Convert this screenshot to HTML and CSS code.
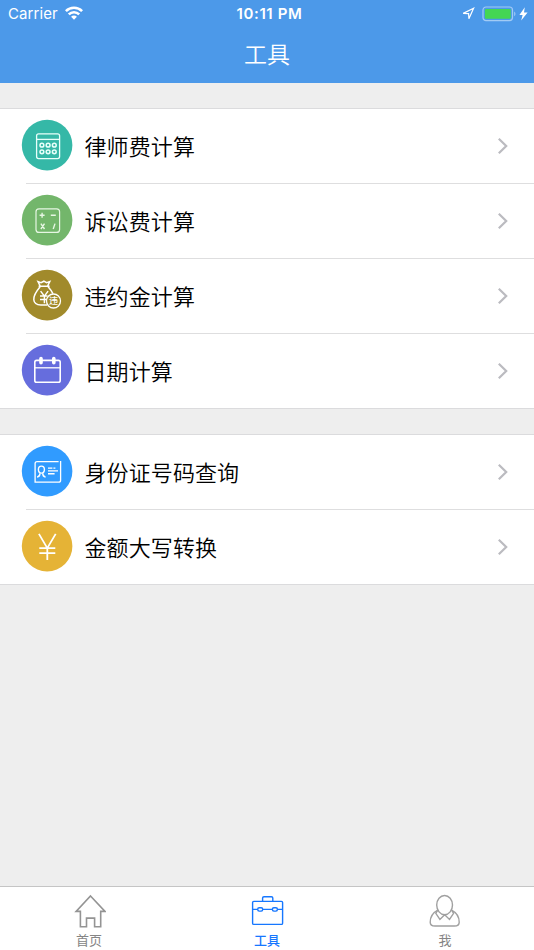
FILE: index.html
```
<!DOCTYPE html>
<html lang="zh-CN">
<head>
    <meta charset="UTF-8">
    <meta name="viewport" content="width=device-width, initial-scale=1.0">
    <title>工具</title>
    <link rel="stylesheet" href="styles.css">
</head>
<body>
    <div class="app">
        <header class="header">
            <div class="status-bar">
                <div class="status-left">
                    <span class="carrier">Carrier</span>
                    <svg class="wifi" width="18" height="14" viewBox="0 0 18 14" fill="none" stroke="#fff" stroke-width="2.6">
                        <path d="M.9 5.1a11.5 11.5 0 0 1 16.2 0"/>
                        <path d="M3.8 8.4a7.4 7.4 0 0 1 10.4 0"/>
                        <path d="M9 13.8 6.1 10.8a3.9 3.9 0 0 1 5.8 0z" fill="#fff" stroke="none"/>
                    </svg>
                </div>
                <span class="time">10:11 PM</span>
                <div class="status-right">
                    <svg width="13" height="13" viewBox="0 0 13 13" fill="none" stroke="#fff" stroke-width="1.2">
                        <path d="M11.6 1.2 1.2 6.4l5.4.2.3 5.2z"/>
                    </svg>
                    <svg class="battery" width="35" height="16" viewBox="0 0 35 16">
                        <rect x="1" y="1" width="29.5" height="13.6" rx="3" fill="none" stroke="#a2cbf5" stroke-width="1.2"/>
                        <rect x="2.9" y="2.9" width="25.8" height="9.8" rx="1.2" fill="#44d653"/>
                        <path d="M32.2 5.6c1.7.8 1.7 3.8 0 4.6z" fill="#a2cbf5"/>
                    </svg>
                    <svg width="9" height="14" viewBox="0 0 9 14">
                        <path d="M5.8.2.4 7.9h3.2L2.2 13.6 8.6 5.5H5z" fill="#fff"/>
                    </svg>
                </div>
            </div>
            <h1 class="title">工具</h1>
        </header>

        <main class="content">
            <ul class="group">
                <li class="row">
                    <svg class="icon" viewBox="0.4 0.4 51 51" fill="none" stroke="#e8fffa" stroke-width="1.3">
                        <circle cx="25.5" cy="25.5" r="25.3" fill="#35b8a7" stroke="none"/>
                        <rect x="15" y="14.2" width="23" height="24.8" rx="2"/>
                        <path d="M15 19.8h23"/>
                        <g stroke-width="1.5">
                            <circle cx="20.3" cy="25.6" r="1.9"/>
                            <circle cx="26.5" cy="25.6" r="1.9"/>
                            <circle cx="32.7" cy="25.6" r="1.9"/>
                            <circle cx="20.3" cy="32.2" r="1.9"/>
                            <circle cx="26.5" cy="32.2" r="1.9"/>
                            <circle cx="32.7" cy="32.2" r="1.9"/>
                        </g>
                    </svg>
                    <span class="label">律师费计算</span>
                    <svg class="arrow" viewBox="0 0 12 18"><path d="m1.8 1.8 7.4 7.2-7.4 7.2"/></svg>
                </li>
                <li class="row">
                    <svg class="icon" viewBox="0.4 0.4 51 51" fill="none" stroke="#e6f6e3" stroke-width="1.2">
                        <circle cx="25.5" cy="25.5" r="25.3" fill="#73b66b" stroke="none"/>
                        <rect x="14.4" y="14.2" width="23.6" height="23.6" rx="3"/>
                        <path d="M18 20.6h5M20.5 18.1v5M29.2 20.6h5" stroke-width="1.4"/>
                        <path d="m19.3 29 3.6 5.4M22.9 29l-3.6 5.4M33.4 29l-1.8 5.4" stroke-width="1.4"/>
                    </svg>
                    <span class="label">诉讼费计算</span>
                    <svg class="arrow" viewBox="0 0 12 18"><path d="m1.8 1.8 7.4 7.2-7.4 7.2"/></svg>
                </li>
                <li class="row">
                    <svg class="icon" viewBox="0.4 0.4 51 51" fill="none" stroke="#fff" stroke-width="1.5">
                        <circle cx="25.5" cy="25.5" r="25.3" fill="#a18a2b" stroke="none"/>
                        <path d="M18.5 16.3 16.4 12l3 1 2.9-1.4 2.7 1.4 3.2-1-2.1 4.3M17 16.7h11"/>
                        <path d="M18.5 17.2c-3.5 4.2-6.8 8.4-6.3 13 .3 3.7 3.2 5.1 7 5.1h6.3M26.5 17.2c2 2.2 3.5 4.3 4.8 6.8"/>
                        <path d="m19 21.5 3.8 5 3.7-5M22.8 26.5v7.2M18.4 26.5h7.5M18.4 29.8H25"/>
                        <circle cx="31.9" cy="31.4" r="7" fill="#a18a2b" stroke-width="1.3"/>
                        <text class="badge" x="31.9" y="34.7" text-anchor="middle">违</text>
                    </svg>
                    <span class="label">违约金计算</span>
                    <svg class="arrow" viewBox="0 0 12 18"><path d="m1.8 1.8 7.4 7.2-7.4 7.2"/></svg>
                </li>
                <li class="row">
                    <svg class="icon" viewBox="0.4 0.4 51 51" fill="none" stroke="#fff" stroke-width="1.6">
                        <circle cx="25.5" cy="25.5" r="25.3" fill="#666ddd" stroke="none"/>
                        <rect x="13.2" y="15.8" width="25.4" height="21.8" rx="1.8"/>
                        <path d="M13.2 23.2h25.4" stroke-width="1.3"/>
                        <path d="M19.4 13.9v4.2M32.2 13.9v4.2" stroke-width="3.6" stroke-linecap="round"/>
                    </svg>
                    <span class="label">日期计算</span>
                    <svg class="arrow" viewBox="0 0 12 18"><path d="m1.8 1.8 7.4 7.2-7.4 7.2"/></svg>
                </li>
            </ul>

            <ul class="group">
                <li class="row">
                    <svg class="icon" viewBox="0.4 0.4 51 51" fill="none" stroke="#fff" stroke-width="1.3">
                        <circle cx="25.5" cy="25.5" r="25.3" fill="#309bff" stroke="none"/>
                        <path d="M37 16H15.5a2 2 0 0 0-2 2v18.6H37a2 2 0 0 0 2-2V15.4"/>
                        <ellipse cx="19.8" cy="24" rx="3" ry="3.5" stroke-width="1.4"/>
                        <path d="M15.4 31.5c2.2-.3 3-1.4 3-3.8M24 31.5c-2.2-.3-2.9-1.4-2.9-3.8" stroke-width="1.4"/>
                        <path d="M26.4 22.5h4.4M31.8 22.5h2M26.4 25.3h10M26.4 28.2H33" stroke-width="1.4"/>
                    </svg>
                    <span class="label">身份证号码查询</span>
                    <svg class="arrow" viewBox="0 0 12 18"><path d="m1.8 1.8 7.4 7.2-7.4 7.2"/></svg>
                </li>
                <li class="row">
                    <svg class="icon" viewBox="0.4 0.4 51 51" fill="none" stroke="#fff" stroke-width="1.8">
                        <circle cx="25.5" cy="25.5" r="25.3" fill="#e5b336" stroke="none"/>
                        <path d="m17.3 13.3 8.4 14.2 8.4-14.2M25.7 27.5v11.8M17.7 27.6h16M17.7 32.5h16"/>
                    </svg>
                    <span class="label">金额大写转换</span>
                    <svg class="arrow" viewBox="0 0 12 18"><path d="m1.8 1.8 7.4 7.2-7.4 7.2"/></svg>
                </li>
            </ul>
        </main>

        <nav class="tab-bar">
            <a class="tab">
                <svg class="tab-icon" viewBox="0 0 34 36" fill="none" stroke="#949494" stroke-width="1.6">
                    <path d="M18.5 3 33 18.4h-4.3v15.3h-6.1v-8.6h-8.1v8.6H8.4V18.4H4.1z"/>
                </svg>
                <span>首页</span>
            </a>
            <a class="tab active">
                <svg class="tab-icon" viewBox="0 0 34 36" fill="none" stroke="#1677ff" stroke-width="1.4">
                    <rect x="2.6" y="8.4" width="30" height="23" rx="1.2"/>
                    <path d="M12.6 8.4V5.1c0-.9.5-1.4 1.4-1.4h7.4c.9 0 1.4.5 1.4 1.4v3.3"/>
                    <path d="M2.7 16.4h5M12.7 16.4h9.8M27.5 16.4h5.2" stroke-width="1.3"/>
                    <rect x="7.7" y="14.7" width="5" height="3.4" rx="1.5"/>
                    <rect x="22.4" y="14.7" width="5" height="3.4" rx="1.5"/>
                </svg>
                <span>工具</span>
            </a>
            <a class="tab">
                <svg class="tab-icon" viewBox="1 0 34 36" fill="none" stroke="#a0a0a0" stroke-width="1.4">
                    <ellipse cx="17.6" cy="12.1" rx="7.9" ry="9.6"/>
                    <path d="M10.8 17.2C5.8 19.8 3.2 24.2 3.2 29.2c0 2.6 1.8 3.8 4.8 3.8h19.4c3 0 4.8-1.2 4.8-3.8 0-5-2.6-9.4-7.6-12"/>
                    <path d="m10.8 17.2-2 3.1 4.1 6.1 4.8-4.6 4.8 4.6 4.1-6.1-2-3.1"/>
                </svg>
                <span>我</span>
            </a>
        </nav>
    </div>
</body>
</html>
```
FILE: styles.css
```
body {
    margin: 0;
    font-family: Inter, "Noto Sans CJK SC", sans-serif;
    background-color: #eee;
}
.app {
    display: flex;
    flex-direction: column;
    height: 950px;
    overflow: hidden;
}
.header {
    height: 83px;
    background-color: #4c99e9;
    color: white;
}
.status-bar {
    display: grid;
    grid-template-columns: 1fr auto 1fr;
    align-items: center;
    height: 27px;
    padding: 0 6px 0 8px;
}
.status-left {
    display: flex;
    align-items: center;
    gap: 7px;
}
.carrier {
    font-size: 15px;
    letter-spacing: 0.1px;
}
.wifi {
    margin-top: -1px;
}
.time {
    padding-left: 3px;
    font-size: 15px;
    font-weight: 600;
    letter-spacing: 0.6px;
}
.status-right {
    display: flex;
    align-items: center;
    justify-content: flex-end;
}
.battery {
    margin: 0 2px 0 7px;
}
.title {
    margin: 0;
    font-size: 23px;
    font-weight: 350;
    line-height: 56px;
    text-align: center;
}
.content {
    flex: 1;
    padding-top: 25px;
}
.group {
    margin: 0 0 25px;
    padding: 0;
    list-style: none;
    background-color: white;
    border-top: 1px solid #dbdbdd;
    border-bottom: 1px solid #dbdbdd;
}
.row {
    display: flex;
    align-items: center;
    box-sizing: border-box;
    height: 75px;
    margin-left: 26px;
    padding: 0 25px 2px 0;
    border-bottom: 1px solid #dededf;
}
.row:last-child {
    height: 74px;
    border-bottom: none;
}
.icon {
    width: 51px;
    height: 51px;
    margin-left: -4.5px;
    overflow: visible;
}
.badge {
    font-size: 9px;
    font-weight: 500;
    fill: white;
    stroke: none;
}
.label {
    flex: 1;
    margin-left: 12px;
    padding-top: 3px;
    font-size: 22px;
    font-weight: 350;
    line-height: 32px;
    letter-spacing: 0.1px;
    color: #000;
}
.arrow {
    width: 12px;
    height: 18px;
    margin-top: 1px;
    fill: none;
    stroke: #bbbbc0;
    stroke-width: 2.2;
}
.tab-bar {
    display: flex;
    height: 63px;
    background-color: white;
    border-top: 1px solid #c5c5c5;
}
.tab {
    flex: 1;
    display: flex;
    flex-direction: column;
    align-items: center;
    padding-top: 6px;
    font-size: 13px;
    line-height: 23px;
    color: #858585;
}
.tab-icon {
    flex: none;
    width: 34px;
    height: 36px;
}
.active {
    color: #1677ff;
    font-weight: 500;
}
```
